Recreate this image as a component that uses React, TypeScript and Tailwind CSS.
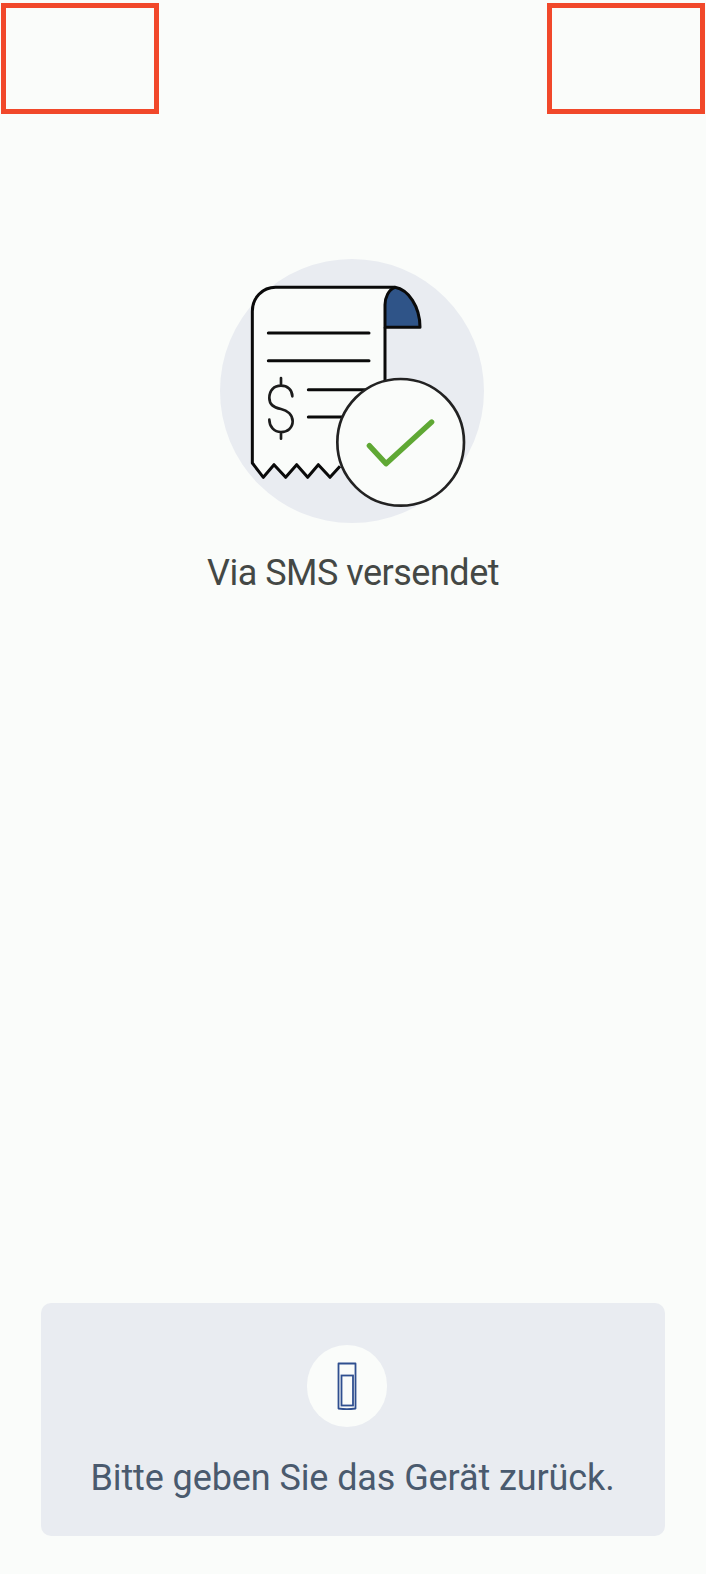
export default function App() {
  return (
    <div className="flex h-[1574px] w-[706px] flex-col overflow-hidden bg-[#fafcfa] font-['Roboto',sans-serif]">
      <header className="flex justify-between pl-px pr-px pt-[3px]">
        <div className="h-[111px] w-[158px] border-[5px] border-[#f1482a]" />
        <div className="h-[111px] w-[158px] border-[5px] border-[#f1482a]" />
      </header>

      <main className="mt-[145px] flex flex-col items-center">
        <div className="ml-[-2px] h-[264px] w-[264px]">
          <svg viewBox="60 58 792 792" className="block h-full w-full">
            <circle cx="456" cy="454" r="396" fill="#e9ecf1" />
            <path
              d="M157 670 V215 C157 175 187 143 227 143 H585 C565 150 555 175 555 195 V430 L420 680 L390 713 L355 675 L323 713 L290 675 L257 713 L222 675 L190 713 Z"
              fill="#fafcfa"
              stroke="none"
            />
            <path
              d="M420 680 L390 713 L355 675 L323 713 L290 675 L257 713 L222 675 L190 713 L157 670 V215 C157 175 187 143 227 143 H585"
              fill="none"
              stroke="#0a0a0a"
              strokeWidth="9"
              strokeLinejoin="round"
            />
            <path d="M555 263 V430" fill="none" stroke="#0a0a0a" strokeWidth="9" />
            <path
              d="M585 143 C565 150 555 175 555 195 V263 H660 C660 200 625 150 585 143 Z"
              fill="#2f5488"
              stroke="#0a0a0a"
              strokeWidth="9"
              strokeLinejoin="round"
            />
            <path
              d="M205 280 H507 M205 363 H507 M325 450 H505 M325 532 H430"
              stroke="#0a0a0a"
              strokeWidth="9"
              strokeLinecap="round"
            />
            <path
              d="M243 415 V438 M243 577 V597 M277 470 C277 450 262 438 243 438 C222 438 208 452 208 475 C208 495 225 505 243 508 C262 512 278 525 278 545 C278 565 262 577 243 577 C222 577 208 560 208 540"
              fill="none"
              stroke="#1c1c1c"
              strokeWidth="8"
              strokeLinecap="round"
            />
            <circle cx="602" cy="608" r="190" fill="#fafcfa" stroke="#222222" strokeWidth="8" />
            <path
              d="M508 618 L558 672 L695 547"
              fill="none"
              stroke="#5fa834"
              strokeWidth="16"
              strokeLinecap="round"
              strokeLinejoin="round"
            />
          </svg>
        </div>
        <p className="mt-[25px] text-[36px] leading-[50px] font-normal tracking-[-0.5px] whitespace-nowrap text-[#444845]">
          Via SMS versendet
        </p>
      </main>

      <section className="mt-auto mb-[38px] ml-[40.5px] flex h-[233px] w-[624px] flex-col items-center rounded-[10px] bg-[#e9ecf1] pt-[42px]">
        <div className="mr-[12px] flex h-[82px] w-[80px] items-center justify-center rounded-full bg-[#fafcfa]">
          <svg viewBox="0 0 20 48" className="block h-[48px] w-[20px]">
            <path d="M1.5 1.5 H18.5 V46.5 C13 47.5 7 47.5 1.5 46.5 Z" fill="none" stroke="#2f4f8f" strokeWidth="1.8" strokeLinejoin="round" />
            <rect x="4.5" y="13.5" width="11.5" height="30" fill="none" stroke="#2f4f8f" strokeWidth="1.8" />
          </svg>
        </div>
        <p className="mt-[26px] text-[36px] leading-[50px] font-normal tracking-[-0.1px] whitespace-nowrap text-[#4a5a6e]">
          Bitte geben Sie das Gerät zurück.
        </p>
      </section>
    </div>
  );
}
